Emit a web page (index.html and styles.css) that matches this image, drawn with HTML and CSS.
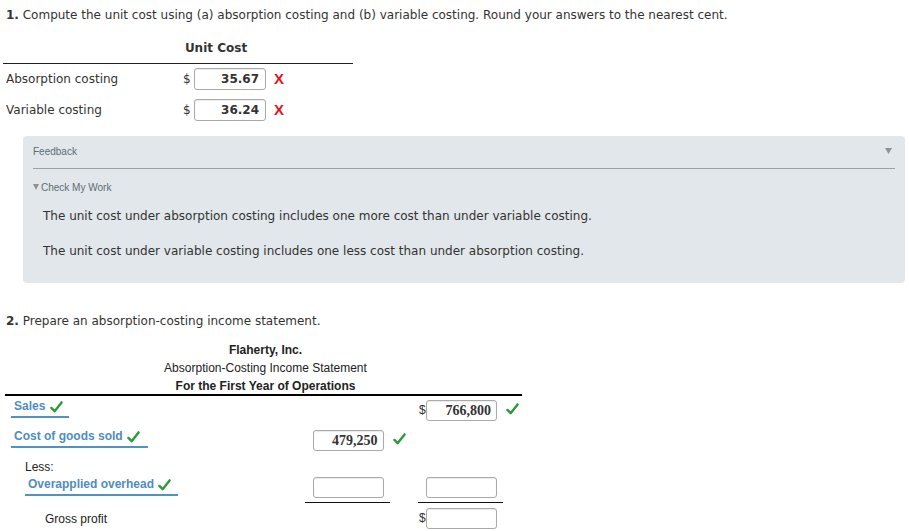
FILE: index.html
```html
<!DOCTYPE html>
<html>
<head>
<meta charset="utf-8">
<link rel="stylesheet" href="styles.css">
</head>
<body>
<p class="q">
  <b>1.</b> Compute the unit cost using (a) absorption costing and (b) variable costing. Round your answers to the nearest cent.
</p>

<div class="uc">
  <div class="uc-head">
    <span class="uc-title">Unit Cost</span>
  </div>
  <div class="uc-row">
    <span class="uc-label">Absorption costing</span>
    <span class="dollar">$</span>
    <span class="box v">35.67</span>
    <span class="x">X</span>
  </div>
  <div class="uc-row">
    <span class="uc-label">Variable costing</span>
    <span class="dollar">$</span>
    <span class="box v">36.24</span>
    <span class="x">X</span>
  </div>
</div>

<div class="fb">
  <div class="fb-head">
    <span>Feedback</span>
    <svg class="tri" viewBox="0 0 7 6"><polygon points="0,0 7,0 3.5,6" /></svg>
  </div>
  <div class="fb-sub"><svg class="tri2" viewBox="0 0 6 6"><polygon points="0,0 6,0 3,6" /></svg>Check My Work</div>
  <p class="fb-p">The unit cost under absorption costing includes one more cost than under variable costing.</p>
  <p class="fb-p">The unit cost under variable costing includes one less cost than under absorption costing.</p>
</div>

<p class="q q2"><b>2.</b> Prepare an absorption-costing income statement.</p>

<div class="stmt">
  <div class="st-head">
    <div class="b">Flaherty, Inc.</div>
    <div>Absorption-Costing Income Statement</div>
    <div class="b">For the First Year of Operations</div>
  </div>

  <div class="st-row r1">
    <div class="c-label"><span class="lab lab1">Sales <svg class="ck" viewBox="0 0 14 13"><path d="M1.5 7.5 L5 11 L12.5 1.5" /></svg></span></div>
    <div class="c-b"></div>
    <div class="c-ck"></div>
    <div class="c-c"><span class="dollar2">$</span><span class="box n">766,800</span></div>
    <div class="c-ck"><svg class="ck" viewBox="0 0 14 13"><path d="M1.5 7.5 L5 11 L12.5 1.5" /></svg></div>
  </div>

  <div class="st-row r2">
    <div class="c-label"><span class="lab">Cost of goods sold <svg class="ck" viewBox="0 0 14 13"><path d="M1.5 7.5 L5 11 L12.5 1.5" /></svg></span></div>
    <div class="c-b"><span class="box n">479,250</span></div>
    <div class="c-ck"><svg class="ck" viewBox="0 0 14 13"><path d="M1.5 7.5 L5 11 L12.5 1.5" /></svg></div>
    <div class="c-c"></div>
    <div class="c-ck"></div>
  </div>

  <div class="st-row r3">
    <div class="c-label less">Less:</div>
  </div>

  <div class="st-row r4">
    <div class="c-label"><span class="lab lab2">Overapplied overhead <svg class="ck" viewBox="0 0 14 13"><path d="M1.5 7.5 L5 11 L12.5 1.5" /></svg></span></div>
    <div class="c-b ul"><span class="box n"></span></div>
    <div class="c-ck"></div>
    <div class="c-c ul"><span class="dollar2 blank">$</span><span class="box n"></span></div>
    <div class="c-ck"></div>
  </div>

  <div class="st-row r5">
    <div class="c-label gp">Gross profit</div>
    <div class="c-b"></div>
    <div class="c-ck"></div>
    <div class="c-c"><span class="dollar2">$</span><span class="box n"></span></div>
    <div class="c-ck"></div>
  </div>
</div>
</body>
</html>
```

FILE: styles.css
```css
* { box-sizing: border-box; }
html, body { margin: 0; padding: 0; background: #fff; }
body {
  font-family: "DejaVu Sans", Verdana, sans-serif;
  font-size: 12px;
  color: #333;
  width: 909px;
  height: 531px;
  overflow: hidden;
}
.q { margin: 0; padding: 7px 0 0 6px; line-height: 16px; }
.q b { font-weight: bold; }

/* unit cost */
.uc { margin: 17px 0 0 3px; width: 350px; }
.uc-head {
  height: 24px;
  border-bottom: 1px solid #222;
  display: grid;
  grid-template-columns: 177px 86px 1fr;
}
.uc-title { grid-column: 2; font-weight: bold; text-align: center; padding-right: 14px; line-height: 16px; }
.uc-row {
  display: grid;
  grid-template-columns: 177px 14px 72px 1fr;
  align-items: center;
  height: 31px;
  padding-bottom: 2px;
}
.uc-label { padding-left: 3px; }
.dollar { font-size: 12px; color: #333; text-align: left; padding-left: 3px; }
.box {
  display: inline-block;
  height: 22px;
  border: 1px solid #a9a9a9;
  border-radius: 3px;
  background: #fff;
  box-shadow: inset 0 1px 1px rgba(0,0,0,0.08);
  text-align: right;
  padding: 0 6px;
  line-height: 20px;
}
.box.v { width: 72px; font-weight: bold; color: #333; }
.x { color: #e8101a; font-weight: bold; font-size: 15px; padding-left: 8px; font-family: "Liberation Sans", Arial, sans-serif; }

/* feedback */
.fb {
  margin: 10px 4px 0 23px;
  background: #e1e7ea;
  border-radius: 4px;
  padding: 0 10px 20px 10px;
  height: 147px;
}
.fb-head {
  display: flex;
  justify-content: space-between;
  align-items: flex-start;
  font-family: "Liberation Sans", Arial, sans-serif;
  font-size: 10px;
  color: #5e6d74;
  padding-top: 10px;
  height: 33px;
  border-bottom: 1px solid #9aa0a4;
}
.tri { width: 7px; height: 6px; margin-top: 2px; margin-right: 3px; }
.tri polygon, .tri2 polygon { fill: #8c9397; }
.fb-sub {
  font-family: "Liberation Sans", Arial, sans-serif;
  font-size: 10px;
  color: #5e6d74;
  padding-top: 13px;
  line-height: 12px;
}
.tri2 { width: 6px; height: 6px; margin-right: 2px; vertical-align: 1px; }
.fb-p { margin: 14px 0 0 10px; line-height: 16px; color: #333; }
.fb-p + .fb-p { margin-top: 19px; }

.q2 { padding-top: 30px; }

/* statement */
.stmt {
  margin: 12px 0 0 5px;
  width: 517px;
  font-family: "Liberation Sans", Arial, sans-serif;
  font-size: 12px;
  color: #222;
}
.st-head {
  text-align: center;
  line-height: 18px;
  padding-left: 4px;
  height: 55px;
  border-bottom: 2px solid #000;
}
.st-head .b { font-weight: bold; }
.st-row {
  display: grid;
  grid-template-columns: 300px 85px 28px 85px 30px;
  width: 528px;
}
.r1 { height: 30px; }
.r2 { height: 30px; }
.r3 { height: 19px; }
.r4 { height: 29px; }
.r5 { height: 28px; }
.lab {
  display: inline-block;
  margin-left: 6px;
  margin-top: 3px;
  padding: 0 8px 3px 3px;
  font-weight: bold;
  color: #4f8dc1;
  border-bottom: 2px solid #4f93c6;
  line-height: 14px;
}
.lab1 { padding-right: 6px; }
.lab2 { margin-left: 20px; margin-top: 2px; padding-right: 7px; }
.ck { width: 13px; height: 12px; vertical-align: -3px; margin-left: 1px; }
.ck path { fill: none; stroke: #2f9a3c; stroke-width: 2.6; stroke-linecap: round; stroke-linejoin: round; }
.c-b, .c-c, .c-ck { display: flex; align-items: center; }
.c-b { justify-content: center; padding-left: 1px; }
.c-c { padding-left: 1px; }
.c-ck { padding-left: 2px; }
.dollar2 { width: 7px; flex: none; font-size: 12px; color: #333; line-height: 14px; }
.dollar2.blank { visibility: hidden; }
.box.n {
  width: 71px;
  height: 21px;
  font-family: "Liberation Serif", "Times New Roman", serif;
  font-weight: bold;
  font-size: 14px;
  color: #333;
  line-height: 19px;
  padding-right: 5px;
}
.r1 .c-c, .r1 .c-ck { align-items: flex-start; padding-top: 4px; }
.r1 .c-ck svg { margin-top: 3px; }
.r2 .c-b, .r2 .c-ck { align-items: flex-start; padding-top: 4px; }
.r2 .c-ck svg { margin-top: 3px; }
.r1 .c-c .dollar2, .r5 .c-c .dollar2 { margin-top: 3px; }
.r4 .c-b, .r4 .c-c { align-items: flex-start; padding-top: 2px; }
.ul { border-bottom: 1px solid #111; height: 28px; }
.less { padding-left: 20px; line-height: 14px; padding-top: 4px; }
.gp { padding-left: 40px; padding-top: 8px; line-height: 14px; }
.r5 .c-c { align-items: flex-start; padding-top: 4px; }
```
